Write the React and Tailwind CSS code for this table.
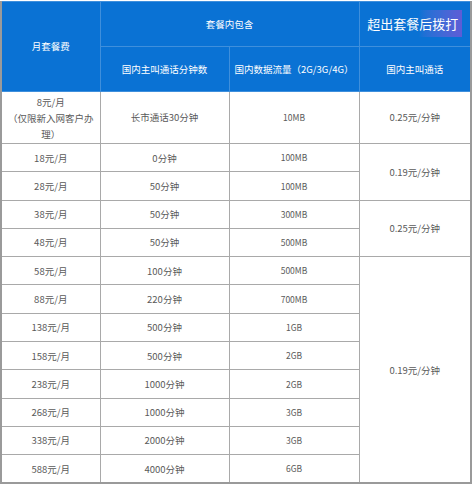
import React from "react";

const rows = [
  { fee: "18元/月", min: "0分钟", data: "100MB" },
  { fee: "28元/月", min: "50分钟", data: "100MB" },
  { fee: "38元/月", min: "50分钟", data: "300MB" },
  { fee: "48元/月", min: "50分钟", data: "500MB" },
  { fee: "58元/月", min: "100分钟", data: "500MB" },
  { fee: "88元/月", min: "220分钟", data: "700MB" },
  { fee: "138元/月", min: "500分钟", data: "1GB" },
  { fee: "158元/月", min: "500分钟", data: "2GB" },
  { fee: "238元/月", min: "1000分钟", data: "2GB" },
  { fee: "268元/月", min: "1000分钟", data: "3GB" },
  { fee: "338元/月", min: "2000分钟", data: "3GB" },
  { fee: "588元/月", min: "4000分钟", data: "6GB" },
];

// which rows start a merged rate cell, and how many rows it covers
const rates = {
  0: { span: 2, text: "0.19元/分钟" },
  2: { span: 2, text: "0.25元/分钟" },
  4: { span: 8, text: "0.19元/分钟" },
};

const cell = "border border-[#a9a9a9] text-center align-middle";
const head = "border border-[#3f8fdc] text-center align-middle text-white font-normal";

export default function App() {
  return (
    <div
      className="w-[474px] h-[486px] bg-white pt-[1px] pr-[1px]"
      style={{ fontFamily: '"Noto Sans CJK SC", "Noto Sans", sans-serif' }}
    >
      <table className="w-[472px] border-collapse table-fixed border-l-2 border-l-[#9a9a9a] border-r-2 border-r-[#9a9a9a] border-b-2 border-b-[#9a9a9a] text-[9.5px] text-[#5a5a5a]">
        <colgroup>
          <col className="w-[99px]" />
          <col className="w-[129px]" />
          <col className="w-[130px]" />
          <col />
        </colgroup>
        <thead className="bg-[#0a72d4]">
          <tr className="h-[45px]">
            <th rowSpan={2} className={head}>
              月套餐费
            </th>
            <th colSpan={2} className={head}>
              套餐内包含
            </th>
            <th className={`${head} text-[13px] text-[#dcecff]`}>
              超出套餐
              <span className="bg-gradient-to-r from-[#0a72d4] via-[#3c6ad6] to-[#5d5cd6] py-[4px] pr-[4px]">
                后拨打
              </span>
            </th>
          </tr>
          <tr className="h-[45px]">
            <th className={head}>国内主叫通话分钟数</th>
            <th className={head}>国内数据流量（2G/3G/4G）</th>
            <th className={head}>国内主叫通话</th>
          </tr>
        </thead>
        <tbody>
          <tr className="h-[52px]">
            <td className={`${cell} leading-[16px] px-1`}>
              8元/月
              <br />
              （仅限新入网客户办
              <br />
              理）
            </td>
            <td className={cell}>长市通话30分钟</td>
            <td className={`${cell} text-[8.5px]`}>10MB</td>
            <td className={cell}>0.25元/分钟</td>
          </tr>
          {rows.map((r, i) => (
            <tr key={i} className="h-[28.3px]">
              <td className={cell}>{r.fee}</td>
              <td className={cell}>{r.min}</td>
              <td className={`${cell} text-[8.5px]`}>{r.data}</td>
              {rates[i] && (
                <td rowSpan={rates[i].span} className={cell}>
                  {rates[i].text}
                </td>
              )}
            </tr>
          ))}
        </tbody>
      </table>
    </div>
  );
}
